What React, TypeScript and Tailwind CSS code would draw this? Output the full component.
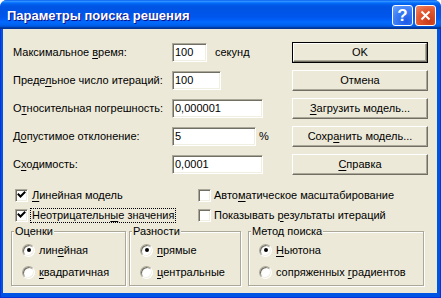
import React from "react";

const FONT = "[font-family:'Liberation_Sans',Arial,sans-serif]";

const sunken =
  "border border-t-[#aca899] border-l-[#aca899] border-r-white border-b-white shadow-[inset_1px_1px_0_#716f64,inset_-1px_-1px_0_#f1efe2]";

const raised =
  "border border-t-white border-l-white border-r-[#716f64] border-b-[#716f64] shadow-[inset_-1px_-1px_0_#aca899] bg-[#ece9d8]";

function Acc({ text, at }: { text: string; at: number }) {
  return (
    <>
      {text.slice(0, at)}
      <u className="underline-offset-[2px]">{text.slice(at, at + 1)}</u>
      {text.slice(at + 1)}
    </>
  );
}

const FIELDS = [
  { label: "Максимальное время:", at: 13, value: "100", w: "w-[35px]", suffix: "секунд" },
  { label: "Предельное число итераций:", at: 5, value: "100", w: "w-[49px]", suffix: "" },
  { label: "Относительная погрешность:", at: 1, value: "0,000001", w: "w-[91px]", suffix: "" },
  { label: "Допустимое отклонение:", at: 1, value: "5", w: "w-[84px]", suffix: "%" },
  { label: "Сходимость:", at: 1, value: "0,0001", w: "w-[91px]", suffix: "" },
];

const BUTTONS = [
  { label: "OK", at: -1, def: true },
  { label: "Отмена", at: -1, def: false },
  { label: "Загрузить модель...", at: 0, def: false },
  { label: "Сохранить модель...", at: 4, def: false },
  { label: "Справка", at: 0, def: false },
];

function Checkbox({ checked }: { checked: boolean }) {
  return (
    <div className={`w-[13px] h-[13px] bg-white shrink-0 flex items-center justify-center ${sunken}`}>
      {checked && (
        <svg width="9" height="9" viewBox="0 0 9 9">
          <path d="M1.5 3.5 L3.5 5.5 L7.5 1.5" fill="none" stroke="#000" strokeWidth="2" strokeLinecap="square" />
        </svg>
      )}
    </div>
  );
}

function Radio({ checked }: { checked: boolean }) {
  return (
    <div
      className={`w-[13px] h-[13px] rounded-full bg-[radial-gradient(circle_at_65%_65%,#fff_0%,#fff_45%,#e4e2d6_100%)] shrink-0 flex items-center justify-center border border-t-[#aca899] border-l-[#aca899] border-r-white border-b-white shadow-[inset_1px_1px_0_#716f64,inset_-1px_-1px_0_#f1efe2]`}
    >
      {checked && <div className="w-[4px] h-[4px] rounded-full bg-black" />}
    </div>
  );
}

function Group({
  title,
  w,
  items,
}: {
  title: string;
  w: string;
  items: { label: string; at: number; checked: boolean }[];
}) {
  return (
    <fieldset
      className={`${w} h-[61px] border border-[#aca899] shadow-[inset_1px_1px_0_#fff,1px_1px_0_#fff]`}
    >
      <legend className="ml-[2px] px-[1px] leading-[13px] bg-[#ece9d8]">{title}</legend>
      <div className="pl-[10px] pt-[1px]">
        {items.map((it) => (
          <div key={it.label} className="h-[22px] flex items-center">
            <Radio checked={it.checked} />
            <span className="ml-[4px]">
              <Acc text={it.label} at={it.at} />
            </span>
          </div>
        ))}
      </div>
    </fieldset>
  );
}

export default function App() {
  return (
    <div className={`w-[441px] h-[298px] bg-white text-[11px] leading-[13px] text-black ${FONT}`}>
      <div className="w-[441px] h-[298px] flex flex-col rounded-t-[7px] overflow-hidden bg-[#0054e3]">
        {/* Title bar */}
        <div className="h-[29px] shrink-0 flex items-center pl-[7px] pr-[5px] bg-[linear-gradient(to_bottom,#0058ee_0%,#3593ff_4%,#288eff_6%,#127dff_8%,#036ffc_10%,#0262ee_14%,#0057e5_20%,#0054e3_24%,#0055eb_56%,#005bf5_66%,#026afe_76%,#0062ef_86%,#0052d6_92%,#0040ab_94%,#003092_100%)]">
          <span className="flex-1 text-white font-bold text-[13px] leading-[16px] pt-[2px] [text-shadow:1px_1px_#0f1089]">
            Параметры поиска решения
          </span>
          <div className="flex gap-[2px] pt-[1px]">
            <div className="w-[21px] h-[21px] rounded-[3px] border border-white bg-[radial-gradient(circle_at_70%_80%,#1c5ae8_0%,#3b7cf5_55%,#6fa5ff_100%)] flex items-center justify-center text-white font-bold text-[17px] leading-none">
              ?
            </div>
            <div className="w-[21px] h-[21px] rounded-[3px] border border-white bg-[radial-gradient(circle_at_70%_80%,#c93a18_0%,#e2582f_55%,#f08a6a_100%)] flex items-center justify-center">
              <svg width="11" height="11" viewBox="0 0 11 11">
                <path d="M1.5 1.5 L9.5 9.5 M9.5 1.5 L1.5 9.5" stroke="#fff" strokeWidth="2" />
              </svg>
            </div>
          </div>
        </div>

        {/* Frame + client */}
        <div className="flex-1 flex flex-col pl-[3px] pr-[4px] pb-[4px] border-x border-b border-[#0831d9]">
          <div className="flex-1 bg-[#ece9d8] flex flex-col pt-[9px] -ml-[1px] -mr-[1px]">
            <div className="flex">
              <div className="w-[289px] pl-[10px]">
                {FIELDS.map((f) => (
                  <div key={f.label} className="h-[28px] flex items-center">
                    <span className="w-[159px] shrink-0">
                      <Acc text={f.label} at={f.at} />
                    </span>
                    <div className={`${f.w} h-[19px] bg-white flex items-center pl-[2px] ${sunken}`}>{f.value}</div>
                    {f.suffix && <span className={f.suffix === "%" ? "ml-[3px]" : "ml-[8px]"}>{f.suffix}</span>}
                  </div>
                ))}
              </div>
              <div className="w-[136px] pt-[4px] flex flex-col gap-[7px]">
                {BUTTONS.map((b) =>
                  b.def ? (
                    <div key={b.label} className="h-[21px] border border-black flex">
                      <div className={`flex-1 flex items-center justify-center ${raised}`}>{b.label}</div>
                    </div>
                  ) : (
                    <div key={b.label} className={`h-[21px] flex items-center justify-center ${raised}`}>
                      {b.at >= 0 ? <Acc text={b.label} at={b.at} /> : b.label}
                    </div>
                  )
                )}
              </div>
            </div>

            {/* Checkboxes */}
            <div className="mt-[7px] pl-[12px] grid grid-cols-[183px_1fr]">
              <div className="h-[20px] flex items-center">
                <Checkbox checked />
                <span className="ml-[2px] px-[1px] border border-transparent">
                  <Acc text="Линейная модель" at={0} />
                </span>
              </div>
              <div className="h-[20px] flex items-center">
                <Checkbox checked={false} />
                <span className="ml-[2px] px-[1px]">
                  <Acc text="Автоматическое масштабирование" at={4} />
                </span>
              </div>
              <div className="h-[20px] flex items-center">
                <Checkbox checked />
                <span className="ml-[2px] px-[1px] border border-dotted border-black">
                  <Acc text="Неотрицательные значения" at={13} />
                </span>
              </div>
              <div className="h-[20px] flex items-center">
                <Checkbox checked={false} />
                <span className="ml-[2px] px-[1px]">
                  <Acc text="Показывать результаты итераций" at={11} />
                </span>
              </div>
            </div>

            {/* Group boxes */}
            <div className="flex pl-[8px]">
              <Group
                title="Оценки"
                w="w-[115px]"
                items={[
                  { label: "линейная", at: 3, checked: true },
                  { label: "квадратичная", at: 0, checked: false },
                ]}
              />
              <div className="ml-[3px]">
                <Group
                  title="Разности"
                  w="w-[112px]"
                  items={[
                    { label: "прямые", at: 0, checked: true },
                    { label: "центральные", at: 0, checked: false },
                  ]}
                />
              </div>
              <div className="ml-[7px]">
                <Group
                  title="Метод поиска"
                  w="w-[176px]"
                  items={[
                    { label: "Ньютона", at: 0, checked: true },
                    { label: "сопряженных градиентов", at: 12, checked: false },
                  ]}
                />
              </div>
            </div>
          </div>
        </div>
      </div>
    </div>
  );
}
